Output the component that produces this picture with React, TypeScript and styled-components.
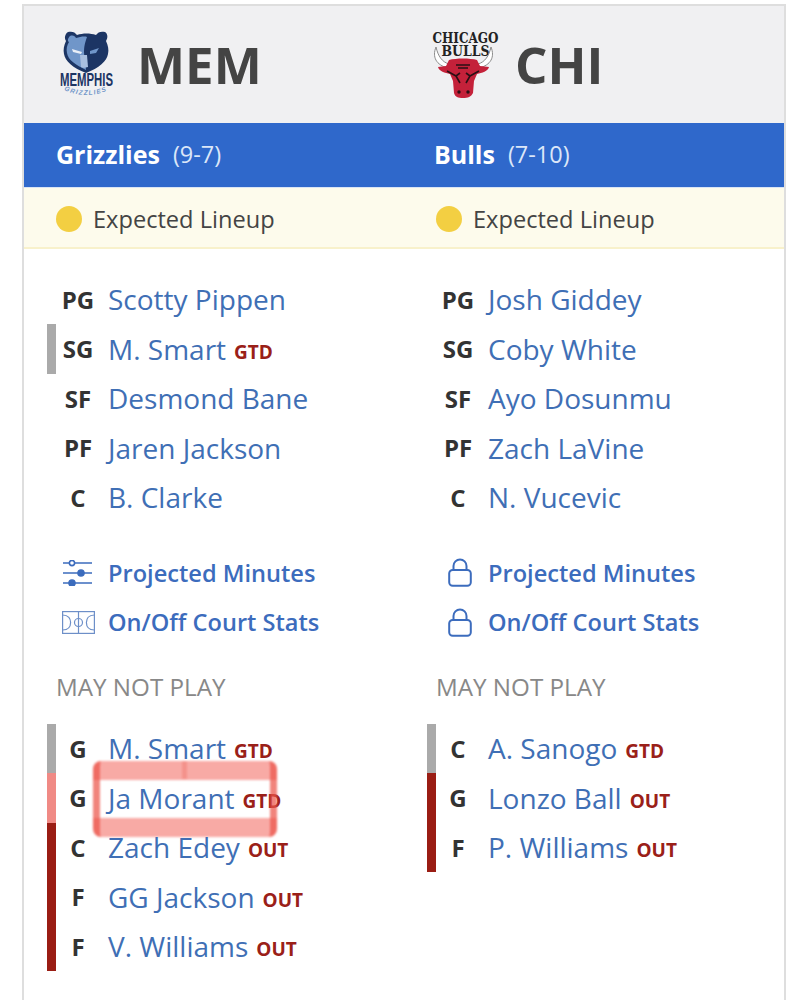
import styled, { createGlobalStyle } from "styled-components";

type Status = "GTD" | "OUT";
type Bar = "none" | "gray" | "pink" | "red";

interface Player {
  pos: string;
  name: string;
  status?: Status;
  bar?: Bar;
  marked?: boolean;
}

interface Team {
  abbr: string;
  name: string;
  record: string;
  logo: React.ReactNode;
  lineup: Player[];
  out: Player[];
  locked: boolean;
}

const barColors: Record<Bar, string> = {
  none: "transparent",
  gray: "#aaaaaa",
  pink: "#f08a85",
  red: "#9a1d14",
};

const GlobalStyle = createGlobalStyle`
  html, body {
    margin: 0;
    height: 1000px;
    overflow: hidden;
    background: #fff;
    font-family: "Open Sans", "Noto Sans", sans-serif;
  }
`;

const Card = styled.div`
  box-sizing: border-box;
  width: 764px;
  height: 996px;
  margin: 4px 0 0 22px;
  border: 2px solid #dedede;
  border-bottom: 0;
  display: grid;
  grid-template-columns: 380px 380px;
  grid-template-rows: 117px 65px 61px 1fr;
`;

const ScoreCell = styled.div<{ $gap: number; $left: number }>`
  background: #f0f0f2;
  display: flex;
  align-items: center;
  gap: ${(p) => p.$gap}px;
  padding-left: ${(p) => p.$left}px;

  svg {
    overflow: visible;
    flex-shrink: 0;
  }
`;

const Abbr = styled.div`
  font-size: 51px;
  font-weight: 700;
  color: #444;
  line-height: 1;
`;

const TeamCell = styled.div<{ $left: number }>`
  background: #2f68cb;
  display: flex;
  align-items: center;
  gap: 13px;
  padding: 0 0 2px ${(p) => p.$left}px;
  border-bottom: 1px solid #d9e4f5;
  color: #fff;
`;

const TeamName = styled.span`
  font-size: 25px;
  font-weight: 700;
`;

const Record = styled.span`
  font-size: 23.5px;
  color: #dbe6f8;
`;

const StatusCell = styled.div`
  background: #fdfbec;
  border-bottom: 2px solid #f8f1cb;
  display: flex;
  align-items: center;
  gap: 11px;
  padding: 3px 0 0 32px;
  font-size: 23.6px;
  color: #444;
`;

const Dot = styled.span`
  width: 26px;
  height: 26px;
  border-radius: 50%;
  background: #f3cf42;
`;

const Column = styled.div`
  padding: 25.5px 0 0 23px;
`;

const Rows = styled.div`
  display: flex;
  flex-direction: column;
`;

const Row = styled.div<{ $bar: Bar }>`
  position: relative;
  height: 49.5px;
  display: flex;
  align-items: center;
  box-sizing: border-box;
  border-left: 9px solid ${(p) => barColors[p.$bar]};
`;

const Pos = styled.span`
  width: 44px;
  text-align: center;
  font-size: 24px;
  font-weight: 700;
  color: #333;
`;

const Name = styled.span`
  margin-left: 8px;
  font-size: 28px;
  color: #3f6fb5;
  white-space: nowrap;
`;

const Tag = styled.span`
  margin-left: 8px;
  margin-top: 6px;
  font-size: 19px;
  font-weight: 700;
  color: #9a2018;
`;

const Links = styled.div`
  display: flex;
  flex-direction: column;
  margin-top: 26px;
`;

const LinkRow = styled.div`
  height: 49.5px;
  display: flex;
  align-items: center;
  font-size: 23.6px;
  font-weight: 600;
  color: #3c6cbd;
  white-space: nowrap;
`;

const LinkIcon = styled.span<{ $left: number }>`
  width: 61px;
  padding-left: ${(p) => p.$left}px;
  box-sizing: border-box;
  display: flex;
  align-items: center;
`;

const SectionLabel = styled.div`
  margin: 23.5px 0 21px 9px;
  height: 32px;
  line-height: 32px;
  font-size: 24.2px;
  color: #888;
`;

/* the red marker someone drew over the screenshot */
const Marker = styled.div`
  position: absolute;
  left: 37px;
  top: -12px;
  width: 184px;
  height: 76px;
  box-sizing: border-box;
  border-radius: 8px;
  border-left: 7px solid rgba(236, 84, 74, 0.72);
  border-right: 7px solid rgba(236, 84, 74, 0.72);
  background: linear-gradient(
    rgba(243, 100, 92, 0.55) 19px,
    transparent 19px,
    transparent 57px,
    rgba(243, 100, 92, 0.55) 57px
  );
  filter: blur(1px);
  pointer-events: none;

  &::after {
    content: "";
    position: absolute;
    left: 82px;
    top: 0;
    width: 5px;
    height: 18px;
    background: rgba(236, 74, 64, 0.25);
  }
`;

const SlidersIcon = () => (
  <svg width="31" height="26" viewBox="0 0 31 26" fill="none" stroke="#3c6cbd" strokeWidth="1.6">
    <path d="M1 3h29M1 13h29M1 23h29" />
    <circle cx="10" cy="3" r="2.6" fill="#fff" />
    <circle cx="19" cy="13" r="3" fill="#3c6cbd" />
    <circle cx="10" cy="23" r="3" fill="#3c6cbd" />
  </svg>
);

const CourtIcon = () => (
  <svg width="33" height="23" viewBox="0 0 33 23" fill="none" stroke="#6d8fc8" strokeWidth="1.2">
    <rect x="0.6" y="0.6" width="31.8" height="21.8" />
    <path d="M16.5 0.6v21.8" />
    <circle cx="16.5" cy="11.5" r="4" />
    <path d="M0.6 4c6 0 8 4 8 7.5s-2 7.5-8 7.5M32.4 4c-6 0-8 4-8 7.5s2 7.5 8 7.5" />
  </svg>
);

const LockIcon = () => (
  <svg width="24" height="29" viewBox="0 0 24 29" fill="none" stroke="#3c6cbd" strokeWidth="2">
    <rect x="1.2" y="12" width="21.6" height="15.8" rx="3.5" />
    <path d="M5.5 12V8a6.5 6.5 0 0 1 13 0v4" />
  </svg>
);

const GrizzliesLogo = () => (
  <svg width="58" height="70" viewBox="0 0 58 70">
    <path
      d="M10 2c4-1 7 0 9 3 6-2 13-2 19 0 2-3 5-4 9-3 3 2 3 6 1 9 2 4 3 9 2 13-1 7-9 14-22 19C15 38 7 31 6 24c-1-4 0-9 2-13-2-3-1-7 2-9z"
      fill="#1c3564"
    />
    <path
      d="M12 6c3-1 5 0 6 2 4-1 8-2 11-1-2 6-3 9-3 15 0 6 2 13 2 18C18 35 10 30 9 23c-1-4 0-8 2-11-2-1-1-4 1-6z"
      fill="#7096c9"
    />
    <path d="M14 19l10 3-1 2-8-2z" fill="#e8eef7" />
    <path d="M22 25h7l1 12c-3 1-6 1-7 0z" fill="#a9c0e0" />
    <path d="M32 21l9-3-3 5-6 1z" fill="#7096c9" />
    <text
      x="28.5"
      y="56"
      textAnchor="middle"
      fontFamily="Liberation Sans, sans-serif"
      fontWeight="700"
      fontSize="19"
      textLength="53"
      lengthAdjust="spacingAndGlyphs"
      fill="#1c3564"
    >
      MEMPHIS
    </text>
    <path id="grizzArc" d="M6 60q22 10 45 0" fill="none" />
    <text fontFamily="Liberation Sans, sans-serif" fontWeight="700" fontStyle="italic" fontSize="6.5" fill="#7096c9" letterSpacing="1.2">
      <textPath href="#grizzArc">GRIZZLIES</textPath>
    </text>
  </svg>
);

const BullsLogo = () => (
  <svg width="68" height="68" viewBox="0 0 68 68">
    <text
      x="33.5"
      y="12"
      textAnchor="middle"
      fontFamily="DejaVu Serif, serif"
      fontWeight="700"
      fontSize="14"
      textLength="66"
      lengthAdjust="spacingAndGlyphs"
      fill="#222"
    >
      CHICAGO
    </text>
    <text
      x="33.5"
      y="25"
      textAnchor="middle"
      fontFamily="DejaVu Serif, serif"
      fontWeight="700"
      fontSize="14"
      textLength="48"
      lengthAdjust="spacingAndGlyphs"
      fill="#222"
    >
      BULLS
    </text>
    <path d="M4 16C0 26 4 34 16 37l1-4C10 31 6 25 4 16z" fill="#fff" stroke="#8a8a8a" strokeWidth="1" />
    <path d="M59 16c4 10 0 18-12 21l-1-4c7-2 11-8 13-17z" fill="#fff" stroke="#8a8a8a" strokeWidth="1" />
    <path
      d="M17 29c7-2 21-2 28 0l3 6 9 1c-1 4-7 6-12 7l-3 7-1 12c-2 4-5 5-10 5s-8-1-9-5l-1-12-3-7c-5-1-11-3-12-7l8-1z"
      fill="#c4213a"
    />
    <path d="M15 40l9 5 4-3M47 40l-9 5-4-3M24 45l4 7M38 45l-4 7M24 34h14M26 37h10" stroke="#2a0f14" strokeWidth="1.6" fill="none" />
    <circle cx="27" cy="61" r="1.7" fill="#2a0f14" />
    <circle cx="36" cy="61" r="1.7" fill="#2a0f14" />
  </svg>
);

const teams: Team[] = [
  {
    abbr: "MEM",
    name: "Grizzlies",
    record: "(9-7)",
    logo: <GrizzliesLogo />,
    locked: false,
    lineup: [
      { pos: "PG", name: "Scotty Pippen" },
      { pos: "SG", name: "M. Smart", status: "GTD", bar: "gray" },
      { pos: "SF", name: "Desmond Bane" },
      { pos: "PF", name: "Jaren Jackson" },
      { pos: "C", name: "B. Clarke" },
    ],
    out: [
      { pos: "G", name: "M. Smart", status: "GTD", bar: "gray" },
      { pos: "G", name: "Ja Morant", status: "GTD", bar: "pink", marked: true },
      { pos: "C", name: "Zach Edey", status: "OUT", bar: "red" },
      { pos: "F", name: "GG Jackson", status: "OUT", bar: "red" },
      { pos: "F", name: "V. Williams", status: "OUT", bar: "red" },
    ],
  },
  {
    abbr: "CHI",
    name: "Bulls",
    record: "(7-10)",
    logo: <BullsLogo />,
    locked: true,
    lineup: [
      { pos: "PG", name: "Josh Giddey" },
      { pos: "SG", name: "Coby White" },
      { pos: "SF", name: "Ayo Dosunmu" },
      { pos: "PF", name: "Zach LaVine" },
      { pos: "C", name: "N. Vucevic" },
    ],
    out: [
      { pos: "C", name: "A. Sanogo", status: "GTD", bar: "gray" },
      { pos: "G", name: "Lonzo Ball", status: "OUT", bar: "red" },
      { pos: "F", name: "P. Williams", status: "OUT", bar: "red" },
    ],
  },
];

const PlayerRow = ({ player }: { player: Player }) => (
  <Row $bar={player.bar ?? "none"}>
    <Pos>{player.pos}</Pos>
    <Name>{player.name}</Name>
    {player.status && <Tag>{player.status}</Tag>}
    {player.marked && <Marker />}
  </Row>
);

const TeamColumn = ({ team }: { team: Team }) => (
  <Column>
    <Rows>
      {team.lineup.map((p) => (
        <PlayerRow key={p.pos} player={p} />
      ))}
    </Rows>
    <Links>
      <LinkRow>
        <LinkIcon $left={team.locked ? 21 : 15}>{team.locked ? <LockIcon /> : <SlidersIcon />}</LinkIcon>
        Projected Minutes
      </LinkRow>
      <LinkRow>
        <LinkIcon $left={team.locked ? 21 : 15}>{team.locked ? <LockIcon /> : <CourtIcon />}</LinkIcon>
        On/Off Court Stats
      </LinkRow>
    </Links>
    <SectionLabel>MAY NOT PLAY</SectionLabel>
    <Rows>
      {team.out.map((p) => (
        <PlayerRow key={p.name} player={p} />
      ))}
    </Rows>
  </Column>
);

export default function App() {
  return (
    <>
      <GlobalStyle />
      <Card>
        <ScoreCell $gap={21} $left={34}>
          {teams[0].logo}
          <Abbr>{teams[0].abbr}</Abbr>
        </ScoreCell>
        <ScoreCell $gap={15} $left={28}>
          {teams[1].logo}
          <Abbr>{teams[1].abbr}</Abbr>
        </ScoreCell>
        <TeamCell $left={32}>
          <TeamName>{teams[0].name}</TeamName>
          <Record>{teams[0].record}</Record>
        </TeamCell>
        <TeamCell $left={30}>
          <TeamName>{teams[1].name}</TeamName>
          <Record>{teams[1].record}</Record>
        </TeamCell>
        <StatusCell>
          <Dot />
          Expected Lineup
        </StatusCell>
        <StatusCell>
          <Dot />
          Expected Lineup
        </StatusCell>
        <TeamColumn team={teams[0]} />
        <TeamColumn team={teams[1]} />
      </Card>
    </>
  );
}
